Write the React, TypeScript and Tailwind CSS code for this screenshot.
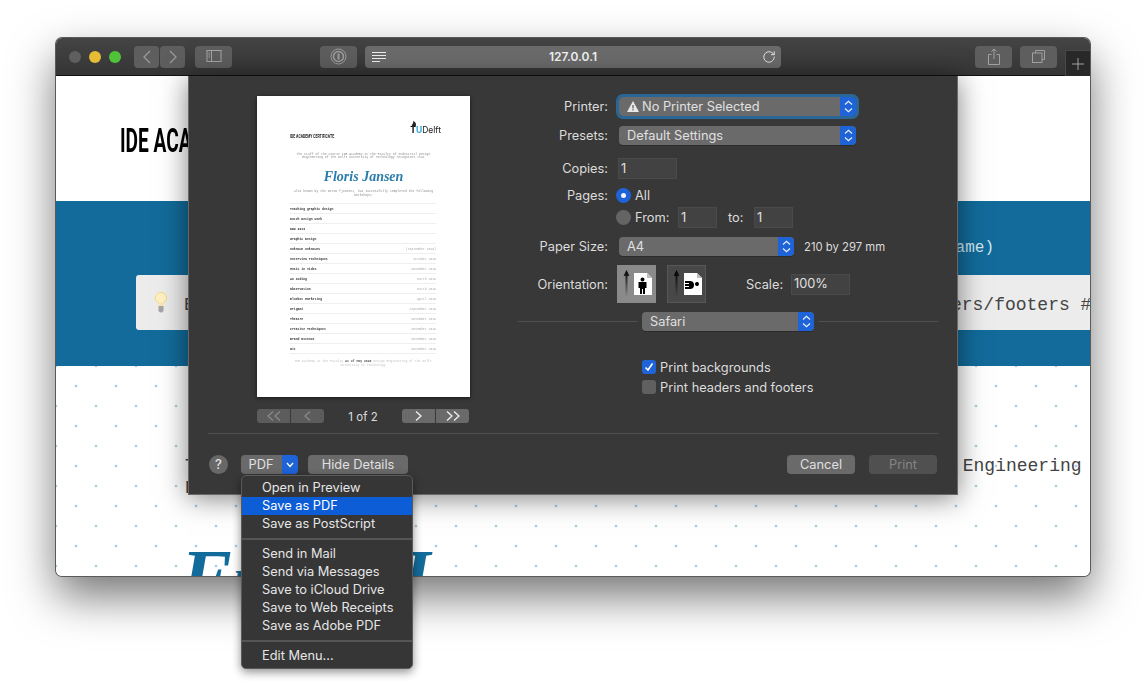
import { RotateCw } from 'lucide-react';
import type { ReactNode } from 'react';

const workshops = [
  ['Teaching graphic design', ''],
  ['Dutch Design Week', ''],
  ['DDW 2019', ''],
  ['Graphic Design', ''],
  ['Unknown Unknowns', '(September 2019)'],
  ['Interview Techniques', 'October 2019'],
  ['Music in Video', 'November 2019'],
  ['AI Coding', 'March 2019'],
  ['Observation', 'March 2019'],
  ['Bluebot Marketing', 'April 2019'],
  ['Origami', 'September 2019'],
  ['Theatre', 'November 2019'],
  ['Creative Techniques', 'November 2019'],
  ['Brand Essence', 'November 2019'],
  ['Git', 'December 2019'],
];

const menuGroups = [
  ['Open in Preview', 'Save as PDF', 'Save as PostScript'],
  ['Send in Mail', 'Send via Messages', 'Save to iCloud Drive', 'Save to Web Receipts', 'Save as Adobe PDF'],
  ['Edit Menu...'],
];

function ToolButton({ className, children }: { className: string; children: ReactNode }) {
  return (
    <div className={`flex h-[22px] items-center justify-center rounded-[4px] bg-[#5e5e5e] ${className}`}>
      {children}
    </div>
  );
}

function UpDown() {
  return (
    <div className="flex h-full w-4 shrink-0 items-center justify-center rounded-r-[4px] bg-[#1f63d8]">
      <svg width="9" height="13" viewBox="0 0 9 13" fill="none" stroke="#e8eefb" strokeWidth="1.2">
        <path d="M1 4.5 4.5 1.2 8 4.5" />
        <path d="M1 8.5 4.5 11.8 8 8.5" />
      </svg>
    </div>
  );
}

function Select({ className, children }: { className: string; children: ReactNode }) {
  return (
    <div className={`flex h-[19px] items-center overflow-hidden rounded-[4px] bg-[#6a6a6a] text-[12.8px] leading-[19px] text-[#e0e0e0] shadow-[0_1px_0_#2c2c2c] ${className}`}>
      <div className="flex flex-1 items-center gap-[3px] pl-[8px]">{children}</div>
      <UpDown />
    </div>
  );
}

function Field({ className, value }: { className: string; value: string }) {
  return (
    <div className={`flex h-[21px] items-center border border-[#4a4a4a] bg-[#424242] pl-[2px] text-[12.8px] text-[#e0e0e0] ${className}`}>
      {value}
    </div>
  );
}

function Label({ children }: { children: ReactNode }) {
  return <div className="w-[90px] shrink-0 text-right text-[12.8px] leading-[19px] text-[#dcdcdc]">{children}</div>;
}

function OrientationIcon({ landscape }: { landscape?: boolean }) {
  return (
    <svg width="32" height="28" viewBox="0 0 32 28">
      <defs>
        <linearGradient id={landscape ? 'tailB' : 'tailA'} x1="0" y1="0" x2="0" y2="1">
          <stop offset="0" stopColor="#000" />
          <stop offset="1" stopColor="#000" stopOpacity="0" />
        </linearGradient>
      </defs>
      <path d="M5.500 0 8.500 6H6.500V27H4.500V6H2.500Z" fill={`url(#${landscape ? 'tailB' : 'tailA'})`} />
      <path d="M13 3H26L31 8V25H13Z" fill="#fff" />
      <path d="M26 3V8H31Z" fill="#bdbdbd" />
      {landscape ? (
        <path d="M14 8H19Q23 8 23 12Q23 16 19 16H14V14H18V13H14V11H18V10H14ZM24 10.500A2 2 0 1 1 27.900 11.500A2 2 0 1 1 24 10.500Z" fill="#000" transform="translate(0 3)" />
      ) : (
        <path d="M19.500 9.500a1.800 1.800 0 1 1 4 0a1.800 1.800 0 1 1-4 0ZM17.500 12H25.500V18H24V24H22V19H21V24H19V18H17.500Z" fill="#000" />
      )}
    </svg>
  );
}

function Chevrons({ left, double, dim }: { left?: boolean; double?: boolean; dim?: boolean }) {
  const stroke = dim ? '#8a8a8a' : '#f0f0f0';
  return (
    <svg width={double ? 14 : 7} height="10" viewBox={double ? '0 0 14 10' : '0 0 7 10'} fill="none" stroke={stroke} strokeWidth="1.300">
      {left ? <path d="M6 .5 1 5l5 4.500" /> : <path d="M1 .5 6 5 1 9.500" />}
      {double && (left ? <path d="M13 .5 8 5l5 4.500" /> : <path d="M8 .5 13 5 8 9.500" />)}
    </svg>
  );
}

function CertificatePage() {
  return (
    <div className="h-[301px] w-[213px] bg-white shadow-[0_1px_4px_rgba(0,0,0,0.6)]">
      {/* the preview is a scaled down bitmap in the original, hence the slight blur */}
      <div className="px-[33px] pt-[28px] font-['Liberation_Mono',monospace] blur-[0.3px]">
        <div className="flex h-[16px] justify-between">
          <div className="origin-left scale-x-[0.62] self-end font-['Roboto',sans-serif] text-[5.600px] leading-[8px] font-bold whitespace-nowrap text-[#222]">
            IDE ACADEMY CERTIFICATE
          </div>
          <div className="relative -mr-[4px] self-start font-['Inter',sans-serif] text-[8.500px] leading-[12px] text-[#222]">
            <span className="font-bold text-black">T</span>
            <span className="font-bold text-[#27a5dc]">U</span>
            Delft
            <svg className="absolute top-[-3px] left-[1px]" width="6" height="6" viewBox="0 0 6 6">
              <path d="M1 6C0 3 3 3 2 0 5 1 6 4 4 6Z" fill="#222" />
            </svg>
          </div>
        </div>
        <p className="mt-[13px] px-[4px] text-center text-[3.150px] leading-[3.400px] text-[#8d8d8d]">
          The staff of the course IDE Academy at the Faculty of Industrial Design Engineering of the Delft University of Technology recognises that
        </p>
        <div className="mt-[6px] text-center font-['Liberation_Serif',serif] text-[14px] leading-[22px] font-bold text-[#2a7cab] italic">
          Floris Jansen
        </div>
        <p className="mt-[2.300px] text-center text-[3.150px] leading-[3.400px] text-[#8d8d8d]">
          also known by the NetID fjansen1, has successfully completed the following workshops:
        </p>
        <div className="mt-[6.500px] w-[146px] border-t border-[#efefef]">
          {workshops.map(([name, date]) => (
            <div key={name} className="flex h-[10px] items-center justify-between border-b border-[#efefef] text-[3.150px]">
              <span className="font-bold text-[#333]">{name}</span>
              <span className="text-[#aaa]">{date}</span>
            </div>
          ))}
        </div>
        <p className="mt-[6px] w-[146px] text-center text-[3.150px] leading-[3.400px] text-[#c4c4c4]">
          IDE Academy at the Faculty <span className="font-bold text-[#555]">As of May 2020</span> Design Engineering of the Delft University of Technology
        </p>
      </div>
    </div>
  );
}

function PreviewColumn() {
  return (
    <div className="ml-[68px] w-[213px] shrink-0 pt-[20px]">
      <CertificatePage />
      <div className="mt-[12px] flex h-[14px] items-center justify-between pr-px">
        <div className="flex h-full w-[67px] gap-px overflow-hidden rounded-[3px]">
          <div className="flex flex-1 items-center justify-center bg-[#5c5c5c]">
            <Chevrons left double dim />
          </div>
          <div className="flex flex-1 items-center justify-center bg-[#5c5c5c]">
            <Chevrons left dim />
          </div>
        </div>
        <div className="mt-[2px] text-[11.500px] leading-[14px] text-[#dcdcdc]">1 of 2</div>
        <div className="flex h-full w-[67px] gap-px overflow-hidden rounded-[3px]">
          <div className="flex flex-1 items-center justify-center bg-[#6a6a6a]">
            <Chevrons />
          </div>
          <div className="flex flex-1 items-center justify-center bg-[#6a6a6a]">
            <Chevrons double />
          </div>
        </div>
      </div>
    </div>
  );
}

function FormColumn() {
  return (
    <div className="ml-[48px] w-[420px] pt-[21px]">
      <div className="flex items-center gap-[11px]">
        <Label>Printer:</Label>
        <Select className="w-[237px] outline-[3px] outline-[#2a6796]">
          <svg width="12" height="11" viewBox="0 0 12 11">
            <path d="M6 0 12 11H0Z" fill="#e8e8e8" />
            <path d="M5.400 4H6.600V7.500H5.400ZM5.400 8.300H6.600V9.500H5.400Z" fill="#555" />
          </svg>
          No Printer Selected
        </Select>
      </div>
      <div className="mt-[10px] flex items-center gap-[11px]">
        <Label>Presets:</Label>
        <Select className="w-[237px]">Default Settings</Select>
      </div>
      <div className="mt-[13px] flex h-[21px] items-center gap-[10px]">
        <Label>Copies:</Label>
        <Field className="w-[59px]" value="1" />
      </div>
      <div className="mt-[8px] flex h-4 items-center gap-[8px]">
        <Label>Pages:</Label>
        <div className="flex h-[15px] w-[15px] items-center justify-center rounded-full bg-[#1f63d8]">
          <div className="h-[5px] w-[5px] rounded-full bg-[#f2f6ff]" />
        </div>
        <span className="-ml-[4px] pt-px text-[12.8px] leading-[16px] text-[#dcdcdc]">All</span>
      </div>
      <div className="mt-[4px] flex h-[21px] items-center text-[12.8px] text-[#dcdcdc]">
        <div className="ml-[98px] h-[15px] w-[15px] rounded-full bg-[#646464]" />
        <span className="ml-[4px] w-[43px]">From:</span>
        <Field className="w-[39px]" value="1" />
        <span className="ml-[11px] w-[26px]">to:</span>
        <Field className="w-[39px]" value="1" />
      </div>
      <div className="mt-[9px] flex h-[19px] items-center gap-[11px]">
        <Label>Paper Size:</Label>
        <Select className="w-[175px]">A4</Select>
        <span className="ml-[-1px] translate-y-px text-[11.300px] leading-[19px] text-[#dcdcdc]">210 by 297 mm</span>
      </div>
      <div className="mt-[9px] flex h-[38px] items-center">
        <Label>Orientation:</Label>
        <div className="ml-[9px] flex h-[38px] w-[39px] items-center justify-center bg-[#8a8a8a]">
          <OrientationIcon />
        </div>
        <div className="ml-[11px] flex h-[38px] w-[39px] items-center justify-center border border-[#575757] bg-[#484848]">
          <OrientationIcon landscape />
        </div>
        <span className="ml-[40px] w-[45px] pt-px text-[12.8px] text-[#dcdcdc]">Scale:</span>
        <Field className="w-[59px]" value="100%" />
      </div>
      <div className="mt-[9px] flex items-center">
        <div className="h-px flex-1 bg-[#505050]" />
        <Select className="mx-[4px] w-[172px]">Safari</Select>
        <div className="h-px flex-1 bg-[#505050]" />
      </div>
      <div className="mt-[29px] ml-[124px] flex h-[14px] items-center gap-[4px] text-[12.8px] text-[#dcdcdc]">
        <div className="flex h-[14px] w-[14px] items-center justify-center rounded-[3px] bg-[#1f63d8]">
          <svg width="10" height="10" viewBox="0 0 10 10" fill="none" stroke="#fff" strokeWidth="1.600">
            <path d="M1.500 5.500 4 8 8.500 1.500" />
          </svg>
        </div>
        <span className="pt-px">Print backgrounds</span>
      </div>
      <div className="mt-[6px] ml-[124px] flex h-[14px] items-center gap-[4px] text-[12.8px] text-[#dcdcdc]">
        <div className="h-[14px] w-[14px] rounded-[3px] bg-[#606060]" />
        <span className="pt-px">Print headers and footers</span>
      </div>
    </div>
  );
}

function SheetFooter() {
  return (
    <div className="flex items-center px-[20px] pt-[21px] text-[12.8px] text-[#e0e0e0]">
      <div className="flex h-[19px] w-[19px] items-center justify-center rounded-full bg-[#686868] text-[13px] font-medium">?</div>
      <div className="ml-[13px] flex h-[19px] w-[57px] overflow-hidden rounded-[4px]">
        <div className="flex flex-1 items-center justify-center bg-[#6a6a6a] pr-px">PDF</div>
        <div className="flex w-4 items-center justify-center bg-[#1f63d8]">
          <svg width="8" height="6" viewBox="0 0 8 6" fill="none" stroke="#fff" strokeWidth="1.300">
            <path d="M1 1 4 4.500 7 1" />
          </svg>
        </div>
      </div>
      <div className="ml-[10px] flex h-[19px] w-[100px] items-center justify-center rounded-[4px] bg-[#6a6a6a]">Hide Details</div>
      <div className="ml-auto flex h-[19px] w-[68px] items-center justify-center rounded-[4px] bg-[#6a6a6a]">Cancel</div>
      <div className="ml-[14px] flex h-[19px] w-[68px] items-center justify-center rounded-[4px] bg-[#505050] text-[#858585]">Print</div>
    </div>
  );
}

function PrintSheet() {
  return (
    <div className="absolute top-0 left-[132px] h-[419px] w-[770px] border-x border-b border-[#686868] bg-[#383838] font-['Inter',sans-serif] shadow-[0_3px_26px_rgba(0,0,0,0.5)]">
      <div className="flex h-[357px]">
        <PreviewColumn />
        <FormColumn />
      </div>
      <div className="mx-[19px] h-px bg-[#505050]" />
      <SheetFooter />
    </div>
  );
}

function TitleBar() {
  return (
    <div className="flex h-[38px] shrink-0 items-center border-b border-[#111] bg-linear-to-b from-[#444444] to-[#353535] pr-[33px] pl-[13px] font-['Inter',sans-serif]">
      <div className="h-3 w-3 rounded-full bg-[#5f5f5f]" />
      <div className="ml-2 h-3 w-3 rounded-full bg-[#e5bc35]" />
      <div className="ml-2 h-3 w-3 rounded-full bg-[#50c23a]" />
      <ToolButton className="ml-[13px] w-[25px]">
        <svg width="10" height="14" viewBox="0 0 10 14" fill="none" stroke="#999" strokeWidth="1.300">
          <path d="M8 1 2 7l6 6" />
        </svg>
      </ToolButton>
      <ToolButton className="ml-px w-[25px]">
        <svg width="10" height="14" viewBox="0 0 10 14" fill="none" stroke="#999" strokeWidth="1.300">
          <path d="M2 1l6 6-6 6" />
        </svg>
      </ToolButton>
      <ToolButton className="ml-[10px] w-[37px]">
        <svg width="16" height="13" viewBox="0 0 16 13" fill="none" stroke="#a5a5a5">
          <rect x="1" y=".5" width="14" height="11" />
          <path d="M5.500 .5v11M2.500 3h1.500M2.500 5h1.500M2.500 7h1.500" />
        </svg>
      </ToolButton>
      <ToolButton className="ml-[88px] w-[37px]">
        <svg width="17" height="17" viewBox="0 0 17 17" fill="none" stroke="#a0a0a0">
          <circle cx="8.500" cy="8.500" r="7.500" />
          <circle cx="8.500" cy="8.500" r="5" strokeWidth="1.500" />
          <path d="M8.500 5.500v6" strokeWidth="2" />
        </svg>
      </ToolButton>
      <ToolButton className="relative ml-2 w-[416px] bg-[#6b6b6b]">
        <svg className="absolute left-[7px]" width="14" height="11" viewBox="0 0 14 11" stroke="#eee">
          <path d="M0 1.500h14M0 4.500h14M0 7.500h14M0 10.500h8" />
        </svg>
        <span className="text-[12px] font-semibold text-[#f2f2f2]">127.0.0.1</span>
        <RotateCw className="absolute right-[5px] h-[14px] w-[14px] text-[#e8e8e8]" strokeWidth={1.600} />
      </ToolButton>
      <ToolButton className="ml-auto w-[37px]">
        <svg width="12" height="17" viewBox="0 0 12 17" fill="none" stroke="#a0a0a0">
          <path d="M3.500 6.500H.5v10h11v-10h-3M6 11V1M3.500 3.500 6 1l2.500 2.500" />
        </svg>
      </ToolButton>
      <ToolButton className="ml-2 w-[37px]">
        <svg width="13" height="13" viewBox="0 0 13 13" fill="none" stroke="#a0a0a0">
          <path d="M3.500 3V.5h9v9H10" />
          <rect x=".5" y="3" width="9.500" height="9.500" />
        </svg>
      </ToolButton>
      <div className="absolute top-[12px] right-0 flex h-[26px] w-[25px] items-center justify-center border-t border-l border-[#484848] bg-[#282828]">
        <svg width="12" height="12" viewBox="0 0 12 12" stroke="#a0a0a0">
          <path d="M6 0v12M0 6h12" />
        </svg>
      </div>
    </div>
  );
}

function PageBehind() {
  return (
    <div className="flex h-full flex-col bg-white">
      <div className="h-[125px] shrink-0 pt-[49px] pl-[64px]">
        <h1 className="origin-left scale-x-[0.58] font-['Roboto',sans-serif] text-[33px] leading-[32px] font-bold whitespace-nowrap text-black">
          IDE ACADEMY CERTIFICATE
        </h1>
      </div>
      <div className="h-[165px] shrink-0 bg-[#126b9a] pt-[36px] font-['Liberation_Mono',monospace]">
        <p className="pr-[96px] text-right text-[16px] leading-[22px] whitespace-nowrap text-[#cfe5f1]">
          Save this page as a PDF (filename: full_name)
        </p>
        <div className="mt-[16px] ml-[80px] flex h-[55px] items-center gap-[17px] rounded-l-[3px] bg-[#ececec] pl-[19px] text-[18px] whitespace-nowrap text-[#444]">
          <svg className="shrink-0" width="12" height="22" viewBox="0 0 12 22">
            <circle cx="6" cy="6" r="5.600" fill="#fdf1c4" stroke="#f5d98a" />
            <path d="M3.500 11h5v6h-5Z" fill="#f8e6ae" />
            <path d="M3.500 14h5v5q-2.500 3-5 0Z" fill="#a5a5a5" />
          </svg>
          <span className="pt-[5px]">Enable print backgrounds in browser's print dialog and disable the headers/footers #</span>
        </div>
      </div>
      <div className="min-h-0 flex-1 overflow-hidden bg-[radial-gradient(circle,#a9cfe4_1.500px,transparent_1.600px),radial-gradient(circle,#a9cfe4_1.500px,transparent_1.600px)] bg-[size:40px_40px] bg-[position:-20px_-20px,0_0] pt-[89px] pl-[129px]">
        <p className="h-[40px] w-[900px] overflow-hidden font-['Liberation_Mono',monospace] text-[18px] leading-[22px] text-[#444]">
          The staff of the course IDE Academy at the Faculty of Industrial Design Engineering Delft University of Technology recognises that
        </p>
        {/* script face in the original: tall capitals, low lowercase */}
        <div className="mt-[43px] -ml-[4px] font-['Liberation_Serif',serif] text-[76px] leading-[76px] font-bold whitespace-nowrap text-[#126b9a] italic">
          F<span className="text-[44px]">loris</span>
          <span className="ml-[80px]">J</span>
          <span className="text-[44px]">ansen</span>
        </div>
      </div>
    </div>
  );
}

function PdfMenu() {
  return (
    <div className="absolute top-[475px] left-[241px] w-[172px] rounded-[5px] border border-[#5a5a5a] bg-[#363636] py-[3px] font-['Inter',sans-serif] text-[12.8px] text-[#e6e6e6] shadow-[0_3px_10px_rgba(0,0,0,0.45)]">
      {menuGroups.map((group, i) => (
        <div key={group[0]}>
          {i > 0 && <div className="my-[5px] h-[2px] bg-[#555]" />}
          {group.map((item) => (
            <div
              key={item}
              className={`flex h-[18px] items-center pl-[20px] ${item === 'Save as PDF' ? 'bg-[#0d5dd6] text-white' : ''}`}
            >
              {item}
            </div>
          ))}
        </div>
      ))}
    </div>
  );
}

export default function App() {
  return (
    <div className="relative h-[697px] w-[1146px] overflow-hidden bg-white">
      {/* Safari window */}
      <div className="absolute top-[38px] left-[56px] flex h-[538px] w-[1034px] flex-col overflow-hidden rounded-[6px] shadow-[0_0_0_1px_#5a5a5a,0_20px_45px_rgba(0,0,0,0.55)]">
        <TitleBar />
        <div className="relative min-h-0 flex-1">
          <PageBehind />
          <PrintSheet />
        </div>
      </div>
      <PdfMenu />
    </div>
  );
}
